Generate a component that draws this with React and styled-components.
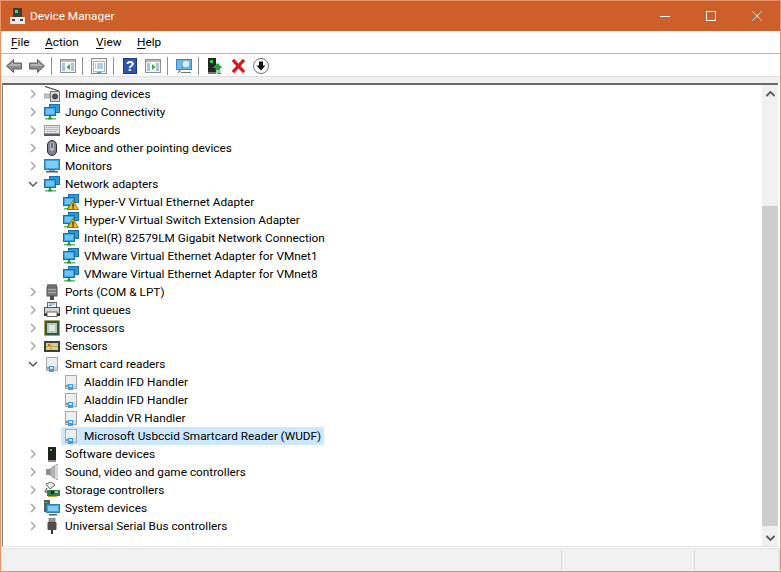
import React from "react";
import styled, { createGlobalStyle } from "styled-components";

const Global = createGlobalStyle`
  html, body { margin: 0; padding: 0; background: #fff; }
  #root { width: 781px; height: 572px; }
`;

const Win = styled.div`
  width: 781px; height: 572px; box-sizing: border-box;
  border: 1px solid #e8926a;
  display: flex; flex-direction: column; background: #fff;
  font-family: Roboto, "Open Sans", "Liberation Sans", sans-serif; font-size: 11.8px; color: #000;
`;
const TitleBar = styled.div`
  height: 30px; flex: none; background: #cd5f2a; color: #fff;
  display: flex; align-items: center; padding-left: 9px;
`;
const TitleText = styled.span` margin-left: 4px; flex: 1; `;
const WinBtn = styled.div`
  width: 46px; height: 30px; display: flex; align-items: center; justify-content: center;
`;
const MenuBar = styled.div`
  height: 22px; flex: none; display: flex; align-items: center; padding-left: 10px;
  border-bottom: 1px solid #b5b5c2;
`;
const MenuItem = styled.span`
  width: ${p => p.$w}px;
  u { text-underline-offset: 2px; }
`;
const Toolbar = styled.div`
  height: 22px; box-sizing: border-box; padding: 2px 0 0 2px; flex: none; display: flex; align-items: center;
`;
const ToolBtn = styled.div`
  width: 23px; height: 20px; box-sizing: border-box; padding-left: 3px; display: flex; align-items: center;
`;
const ToolSep = styled.div`
  width: 1px; height: 18px; background: #8f8f8f; margin: 0 5px 0 2px;
`;
const Band = styled.div`
  height: 6px; flex: none; background: #f0f0f0; border-top: 1px solid #e0e0e0;
`;
const Body = styled.div`
  flex: 1; min-height: 0; display: flex; margin-left: 1px; margin-right: 2px;
  border-top: 2px solid #696969; border-left: 1px solid #828282; border-bottom: 1px solid #e3e3e3;
`;
const Tree = styled.div` flex: 1; overflow: hidden; `;
const Row = styled.div`
  height: 18px; display: flex; align-items: center; padding-left: ${p => 23 + p.$level * 19}px;
`;
const Expander = styled.div`
  width: 14px; height: 18px; padding-right: 2px; flex: none; display: flex; align-items: center; justify-content: center;
`;
const Node = styled.div`
  height: 18px; display: flex; align-items: center; gap: 5px; padding: 0 3px 0 2px;
  background: ${p => (p.$selected ? "#cce8ff" : "transparent")};
`;
const Scroll = styled.div`
  width: 16px; flex: none; background: #f0f0f0; display: flex; flex-direction: column;
`;
const ScrollArrow = styled.div`
  height: 17px; flex: none; display: flex; align-items: center; justify-content: center;
`;
const ScrollGap = styled.div` flex: none; height: ${p => p.$h}px; `;
const ScrollThumb = styled.div` flex: none; height: 320px; background: #cdcdcd; `;
const Status = styled.div`
  height: 23px; flex: none; background: #f0f0f0; display: flex; padding: 1px 0 1px;
  box-sizing: border-box; margin-top: 1px; border-top: 1px solid #e3e3e3;
`;
const StatusCell = styled.div`
  flex: ${p => (p.$w ? `none` : 1)}; width: ${p => p.$w}px; border-right: 1px solid #d7d7d7;
`;

const Svg = ({ children, s = 16, w, h }) => (
  <svg width={w || s} height={h || s} viewBox={`0 0 ${w || s} ${h || s}`} style={{ flex: "none", display: "block" }}>{children}</svg>
);

const Chevron = ({ open }) => (
  <svg width="10" height="10" viewBox="0 0 10 10" style={{ display: "block" }}>
    {open
      ? <path d="M1 3 L5 7 L9 3" fill="none" stroke="#595959" strokeWidth="1.5" />
      : <path d="M3 1 L7 5 L3 9" fill="none" stroke="#a6a6a6" strokeWidth="1.5" />}
  </svg>
);

const Net = () => (
  <>
    <rect x="5.5" y="0.5" width="10" height="8" fill="#2f96d8" stroke="#1c6ea6" />
    <rect x="0.5" y="3.5" width="11" height="8" fill="#39a3e4" stroke="#1c6ea6" />
    <rect x="2" y="5" width="8" height="5" fill="#6fc3f2" />
    <rect x="5" y="12" width="2" height="2" fill="#2f9e3a" />
    <rect x="1" y="14" width="11" height="1.5" fill="#5fc05f" />
    <rect x="4" y="13.5" width="4" height="2" fill="#2f9e3a" />
  </>
);
const Warn = () => (
  <>
    <path d="M10 6.5 L15.5 15.5 H4.5 Z" fill="#f5b921" stroke="#7d5f10" strokeWidth="0.8" />
    <rect x="9.4" y="9.5" width="1.3" height="3.3" fill="#222" />
    <rect x="9.4" y="13.3" width="1.3" height="1.3" fill="#222" />
  </>
);
const Reader = () => (
  <>
    <rect x="2.5" y="1.5" width="11" height="13" fill="#eceef0" stroke="#a5a9ad" />
    <rect x="3" y="10" width="10" height="4" fill="#d3d6d9" />
    <rect x="3" y="11" width="2" height="2" fill="#8f949a" />
    <rect x="5" y="10" width="5" height="6" fill="#3aa0e6" />
    <rect x="6" y="11" width="3" height="2" fill="#bfe4fa" />
  </>
);

const icons = {
  imaging: <>
    <path d="M1 0.5 L15 5" stroke="#444" strokeWidth="1.2" />
    <rect x="0" y="8" width="6" height="4" fill="#c9c9c9" stroke="#666" strokeWidth=".5" />
    <rect x="6.5" y="5.5" width="9" height="10" fill="#d8d8d8" stroke="#777" />
    <circle cx="11" cy="10.5" r="2.6" fill="#4b5660" stroke="#222" strokeWidth=".6" />
  </>,
  net: <Net />,
  warn: <><Net /><Warn /></>,
  keyboard: <>
    <rect x="0.5" y="3.5" width="15" height="8" fill="#e3e5e8" stroke="#9a9a9a" />
    <path d="M2 5.5h12M2 7.5h12M3 9.5h10" stroke="#9ea3a8" strokeDasharray="1 .6" />
    <rect x="0" y="12" width="16" height="2" fill="#5a5a5a" />
  </>,
  mouse: <>
    <rect x="3.5" y="0.5" width="9" height="15" rx="4.5" fill="#7d8692" stroke="#2d2f33" />
    <rect x="6" y="2" width="4" height="9" rx="2" fill="#b4bac2" />
    <rect x="7.4" y="3" width="1.2" height="5" fill="#41464c" />
  </>,
  monitor: <>
    <rect x="0.5" y="1.5" width="15" height="10" fill="#39a3e4" stroke="#2f7db5" />
    <rect x="2" y="3" width="12" height="7" fill="#7fccf5" />
    <rect x="5" y="12" width="6" height="1" fill="#9a9a9a" />
    <rect x="2" y="13" width="12" height="1.5" fill="#5c5c5c" />
  </>,
  ports: <>
    <rect x="3" y="0" width="10" height="2" fill="#8c8c8c" />
    <path d="M4 1v2M6 1v2M8 1v2M10 1v2M12 1v2" stroke="#444" />
    <rect x="3" y="3" width="10" height="9" fill="#7b7b7b" stroke="#555" />
    <rect x="4" y="5" width="8" height="1" fill="#a8a8a8" /><rect x="4" y="8" width="8" height="1" fill="#a8a8a8" />
    <rect x="6" y="12" width="4" height="4" fill="#4a4a4a" />
  </>,
  printer: <>
    <rect x="3.5" y="0.5" width="9" height="5" fill="#eef2f5" stroke="#666" />
    <path d="M5 2h6M5 3.5h3" stroke="#46a1dd" />
    <rect x="0.5" y="5.5" width="15" height="6" fill="#d2d4d6" stroke="#5a5a5a" />
    <rect x="3" y="10" width="10" height="4.5" fill="#fff" stroke="#666" />
    <rect x="0" y="12" width="3" height="2" fill="#333" /><rect x="13" y="12" width="3" height="2" fill="#333" />
  </>,
  cpu: <>
    <rect x="0.5" y="0.5" width="15" height="15" fill="#314a2c" stroke="#c59a44" strokeDasharray="1 1" />
    <rect x="1" y="1" width="14" height="14" fill="#2f5a3a" />
    <rect x="3" y="3" width="10" height="10" fill="#b9c8be" />
    <rect x="5" y="5" width="6" height="6" fill="#dfe6e1" />
  </>,
  sensor: <>
    <rect x="0" y="3" width="16" height="11" fill="#3e3e3e" />
    <rect x="2" y="5" width="12" height="7" fill="#c8d78a" />
    <path d="M2 8.5h12M7 5v7" stroke="#d49b3c" />
    <rect x="4" y="6" width="2" height="2" fill="#e0604a" />
  </>,
  reader: <Reader />,
  software: <>
    <rect x="4" y="1" width="8" height="13" fill="#222" />
    <rect x="6" y="3" width="2" height="2" fill="#3fd15a" />
    <rect x="4" y="14" width="8" height="2" fill="#8d8d8d" />
  </>,
  sound: <>
    <rect x="2" y="5" width="4" height="6" fill="#8f8f8f" />
    <path d="M6 5 L13 0 V16 L6 11 Z" fill="#b4b4b4" stroke="#777" strokeWidth=".6" />
    <rect x="11" y="1" width="2" height="14" fill="#d8d8d8" />
  </>,
  storage: <>
    <path d="M2 2 L7 0 L11 3 L6 7 Z" fill="#e8e8e8" stroke="#444" strokeWidth=".8" />
    <path d="M3 6 L1 10 H5" fill="none" stroke="#444" />
    <rect x="3" y="8" width="13" height="6" fill="#2f7d4a" />
    <rect x="4" y="14" width="9" height="1" fill="#c9a13f" />
    <rect x="7" y="9" width="3" height="3" fill="#222" />
    <rect x="11" y="9" width="3" height="2" fill="#9fd3a8" />
  </>,
  system: <>
    <rect x="0" y="0" width="6" height="12" fill="#5a5a5a" />
    <rect x="1" y="2" width="2" height="1" fill="#4fd04f" />
    <rect x="2.5" y="4.5" width="13" height="8" fill="#39a3e4" stroke="#2f7db5" />
    <rect x="4" y="6" width="10" height="5" fill="#7fccf5" />
    <rect x="5" y="14" width="8" height="1.5" fill="#5c5c5c" />
  </>,
  usb: <>
    <rect x="5" y="0" width="6" height="4" fill="#9a9a9a" stroke="#555" strokeWidth=".6" />
    <rect x="3.5" y="4" width="9" height="8" rx="1" fill="#4d4d4d" />
    <rect x="7" y="12" width="2" height="4" fill="#333" />
  </>,
};

const rows = [
  [0, "c", "imaging", "Imaging devices"],
  [0, "c", "net", "Jungo Connectivity"],
  [0, "c", "keyboard", "Keyboards"],
  [0, "c", "mouse", "Mice and other pointing devices"],
  [0, "c", "monitor", "Monitors"],
  [0, "o", "net", "Network adapters"],
  [1, "", "warn", "Hyper-V Virtual Ethernet Adapter"],
  [1, "", "warn", "Hyper-V Virtual Switch Extension Adapter"],
  [1, "", "net", "Intel(R) 82579LM Gigabit Network Connection"],
  [1, "", "net", "VMware Virtual Ethernet Adapter for VMnet1"],
  [1, "", "net", "VMware Virtual Ethernet Adapter for VMnet8"],
  [0, "c", "ports", "Ports (COM & LPT)"],
  [0, "c", "printer", "Print queues"],
  [0, "c", "cpu", "Processors"],
  [0, "c", "sensor", "Sensors"],
  [0, "o", "reader", "Smart card readers"],
  [1, "", "reader", "Aladdin IFD Handler"],
  [1, "", "reader", "Aladdin IFD Handler"],
  [1, "", "reader", "Aladdin VR Handler"],
  [1, "", "reader", "Microsoft Usbccid Smartcard Reader (WUDF)", true],
  [0, "c", "software", "Software devices"],
  [0, "c", "sound", "Sound, video and game controllers"],
  [0, "c", "storage", "Storage controllers"],
  [0, "c", "system", "System devices"],
  [0, "c", "usb", "Universal Serial Bus controllers"],
];

const Arrow = ({ dir }) => (
  <Svg s={16}>
    <g transform={dir === "r" ? "translate(16,0) scale(-1,1)" : undefined}>
      <path d="M0.5 8 L7.5 1.5 V5 H15.5 V11 H7.5 V14.5 Z" fill="#8c8c8c" stroke="#5f5f5f" />
      <path d="M2.5 8 L7 4 V6 H14.5 V8 Z" fill="#b5b5b5" />
    </g>
  </Svg>
);
const Pane = ({ tri }) => (
  <Svg s={16}>
    <rect x="0.5" y="1.5" width="15" height="13" fill="#f4f6f8" stroke="#8a8f96" />
    <rect x="1" y="2" width="14" height="2" fill="#b8bcc2" />
    <path d="M2 6h3M2 8h3M2 10h3M2 12h3M11 6h3M11 8h3M11 10h3M11 12h3" stroke="#6f8fb0" />
    {tri === "l" ? <path d="M10 6 V12 L6.5 9 Z" fill="#2fae4e" /> : <path d="M7 6 V12 L10.5 9 Z" fill="#2fae4e" />}
  </Svg>
);

const tools = (
  <>
    <ToolBtn><Arrow /></ToolBtn>
    <ToolBtn><Arrow dir="r" /></ToolBtn>
    <ToolSep />
    <ToolBtn><Pane tri="l" /></ToolBtn>
    <ToolSep />
    <ToolBtn>
      <Svg s={16}>
        <rect x="0.5" y="0.5" width="15" height="15" fill="#eef0f3" stroke="#8b8b8b" />
        <rect x="2.5" y="3.5" width="11" height="10" fill="#fff" stroke="#b5b5b5" />
        <path d="M4 6h1M6 6h6M4 8h1M6 8h6M4 10h1M6 10h6" stroke="#5a9bd5" />
        <rect x="6" y="14" width="4" height="2" fill="#2fa7e8" />
      </Svg>
    </ToolBtn>
    <ToolSep />
    <ToolBtn>
      <Svg s={16}>
        <rect x="1" y="0" width="14" height="16" fill="#2f55ad" />
        <rect x="1.5" y="0.5" width="13" height="15" fill="none" stroke="#1d3a85" />
        <text x="8" y="13" fontSize="14" fontWeight="700" fill="#fff" textAnchor="middle" fontFamily="Liberation Sans">?</text>
      </Svg>
    </ToolBtn>
    <ToolBtn><Pane tri="r" /></ToolBtn>
    <ToolSep />
    <ToolBtn>
      <Svg s={16}>
        <rect x="0.5" y="1.5" width="15" height="10" fill="#64bdee" stroke="#3a88be" />
        <circle cx="10" cy="6" r="4" fill="#d6effc" stroke="#7f9fb5" />
        <path d="M7 9 L2 15" stroke="#8a8a8a" strokeWidth="1.5" />
        <rect x="5" y="14" width="10" height="1" fill="#777" />
      </Svg>
    </ToolBtn>
    <ToolSep />
    <ToolBtn>
      <Svg s={16}>
        <rect x="1" y="0" width="8" height="14" fill="#252525" />
        <rect x="3" y="2" width="3" height="3" fill="#35d04a" />
        <rect x="1" y="14" width="8" height="2" fill="#777" />
        <path d="M10.5 5 L15.5 10 H13 V12.5 H8.5 V10 H5.5 Z" fill="#21a53d" />
        <path d="M9 14h5M10 15.5h4" stroke="#21a53d" />
      </Svg>
    </ToolBtn>
    <ToolBtn>
      <Svg s={16}>
        <path d="M4 3 L13 13 M13 3 L4 13" stroke="#d8141c" strokeWidth="3.2" strokeLinecap="square" />
      </Svg>
    </ToolBtn>
    <ToolBtn>
      <Svg s={16}>
        <circle cx="8" cy="8" r="7.5" fill="#fff" stroke="#6f6f6f" />
        <path d="M6 3.5 H10 V7.5 H12.5 L8 12.5 L3.5 7.5 H6 Z" fill="#111" />
      </Svg>
    </ToolBtn>
  </>
);

export default function App() {
  return (
    <>
      <Global />
      <Win>
        <TitleBar>
          <Svg s={16}>
            <rect x="3" y="0" width="9" height="10" fill="#3c3c3c" />
            <rect x="5" y="2" width="3" height="3" fill="#42d65a" />
            <rect x="0" y="9" width="15" height="7" fill="#e9e9e9" />
            <rect x="2" y="11" width="3" height="2" fill="#444" /><rect x="10" y="11" width="3" height="2" fill="#444" />
          </Svg>
          <TitleText>Device Manager</TitleText>
          <WinBtn><Svg w={10} h={10}><rect x="0" y="5" width="10" height="1" fill="#fff" /></Svg></WinBtn>
          <WinBtn><Svg w={10} h={10}><rect x="0.5" y="0.5" width="9" height="9" fill="none" stroke="#fff" /></Svg></WinBtn>
          <WinBtn><Svg w={10} h={10}><path d="M0 0 L10 10 M10 0 L0 10" stroke="#fff" /></Svg></WinBtn>
        </TitleBar>
        <MenuBar>
          <MenuItem $w={34}><u>F</u>ile</MenuItem>
          <MenuItem $w={51}><u>A</u>ction</MenuItem>
          <MenuItem $w={41}><u>V</u>iew</MenuItem>
          <MenuItem $w={30}><u>H</u>elp</MenuItem>
        </MenuBar>
        <Toolbar>{tools}</Toolbar>
        <Band />
        <Body>
          <Tree>
            {rows.map(([level, exp, icon, label, sel], i) => (
              <Row key={i} $level={level}>
                <Expander>{exp && <Chevron open={exp === "o"} />}</Expander>
                <Node $selected={sel}>
                  <Svg s={16}>{icons[icon]}</Svg>
                  <span>{label}</span>
                </Node>
              </Row>
            ))}
          </Tree>
          <Scroll>
            <ScrollArrow><Svg w={9} h={6}><path d="M0.5 5 L4.5 1 L8.5 5" fill="none" stroke="#606060" strokeWidth="2" /></Svg></ScrollArrow>
            <ScrollGap $h={104} />
            <ScrollThumb />
            <ScrollGap $h={3} />
            <ScrollArrow><Svg w={9} h={6}><path d="M0.5 1 L4.5 5 L8.5 1" fill="none" stroke="#606060" strokeWidth="2" /></Svg></ScrollArrow>
          </Scroll>
        </Body>
        <Status>
          <StatusCell />
          <StatusCell $w={132} />
          <StatusCell $w={84} />
        </Status>
      </Win>
    </>
  );
}
